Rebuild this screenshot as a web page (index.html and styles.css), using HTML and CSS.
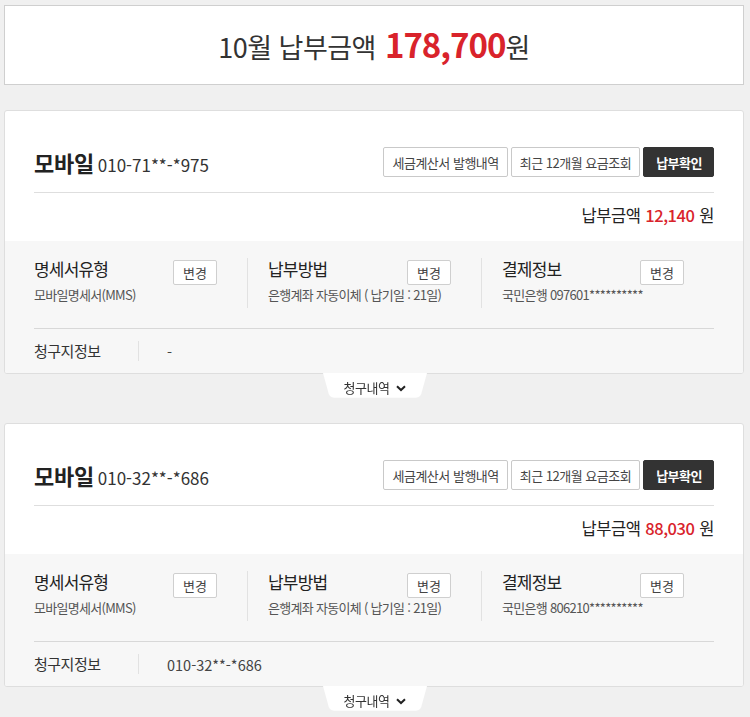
FILE: index.html
```html
<!DOCTYPE html>
<html lang="ko">
<head>
<meta charset="utf-8">
<link rel="stylesheet" href="styles.css">
</head>
<body>
<div class="page">
  <div class="total">
    <span class="total-label">10월 납부금액</span>
    <span class="total-num">178,700</span><span class="total-unit">원</span>
  </div>

  <div class="card">
    <div class="card-top">
      <div class="head">
        <div class="title"><strong>모바일</strong> <span class="phone">010-71**-*975</span></div>
        <div class="btns">
          <button class="btn">세금계산서 발행내역</button>
          <button class="btn">최근 12개월 요금조회</button>
          <button class="btn btn-dark">납부확인</button>
        </div>
      </div>
      <div class="amount">납부금액 <span class="red">12,140</span> 원</div>
    </div>
    <div class="card-info">
      <div class="cols">
        <div class="col">
          <div class="col-head"><span class="col-title">명세서유형</span><button class="btn-sm">변경</button></div>
          <div class="col-sub">모바일명세서(MMS)</div>
        </div>
        <div class="col">
          <div class="col-head"><span class="col-title">납부방법</span><button class="btn-sm">변경</button></div>
          <div class="col-sub">은행계좌 자동이체 ( 납기일 : 21일)</div>
        </div>
        <div class="col">
          <div class="col-head"><span class="col-title">결제정보</span><button class="btn-sm">변경</button></div>
          <div class="col-sub">국민은행 097601**********</div>
        </div>
      </div>
      <div class="bill">
        <span class="bill-label">청구지정보</span>
        <span class="bill-value">-</span>
      </div>
    </div>
  </div>
  <div class="tab-wrap"><div class="tab">청구내역 <svg class="chev" width="10" height="7" viewBox="0 0 10 7"><path d="M1 1.2 L5 5 L9 1.2" fill="none" stroke="#222" stroke-width="2"/></svg></div></div>

  <div class="card">
    <div class="card-top">
      <div class="head">
        <div class="title"><strong>모바일</strong> <span class="phone">010-32**-*686</span></div>
        <div class="btns">
          <button class="btn">세금계산서 발행내역</button>
          <button class="btn">최근 12개월 요금조회</button>
          <button class="btn btn-dark">납부확인</button>
        </div>
      </div>
      <div class="amount">납부금액 <span class="red">88,030</span> 원</div>
    </div>
    <div class="card-info">
      <div class="cols">
        <div class="col">
          <div class="col-head"><span class="col-title">명세서유형</span><button class="btn-sm">변경</button></div>
          <div class="col-sub">모바일명세서(MMS)</div>
        </div>
        <div class="col">
          <div class="col-head"><span class="col-title">납부방법</span><button class="btn-sm">변경</button></div>
          <div class="col-sub">은행계좌 자동이체 ( 납기일 : 21일)</div>
        </div>
        <div class="col">
          <div class="col-head"><span class="col-title">결제정보</span><button class="btn-sm">변경</button></div>
          <div class="col-sub">국민은행 806210**********</div>
        </div>
      </div>
      <div class="bill">
        <span class="bill-label">청구지정보</span>
        <span class="bill-value">010-32**-*686</span>
      </div>
    </div>
  </div>
  <div class="tab-wrap"><div class="tab">청구내역 <svg class="chev" width="10" height="7" viewBox="0 0 10 7"><path d="M1 1.2 L5 5 L9 1.2" fill="none" stroke="#222" stroke-width="2"/></svg></div></div>
</div>
</body>
</html>
```

FILE: styles.css
```css
* { box-sizing: border-box; }
html, body { margin: 0; padding: 0; }
body {
  background: #f0f0f0;
  font-family: "Noto Sans CJK KR", "Noto Sans", sans-serif;
  color: #333;
  width: 750px;
  height: 717px;
  overflow: hidden;
}
.page { padding: 5px 6px 0 4px; }

.total {
  height: 80px;
  background: #fff;
  border: 1px solid #cfcfcf;
  display: flex;
  align-items: baseline;
  justify-content: center;
  padding-top: 14px;
  letter-spacing: -0.5px;
}
.total-label { font-size: 27px; color: #333; margin-right: 9px; }
.total-num { font-size: 33px; font-weight: bold; color: #d9232b; letter-spacing: -1px; }
.total-unit { font-size: 27px; color: #333; }

.card {
  margin-top: 25px;
  background: #fff;
  border: 1px solid #dedede;
  border-radius: 3px;
  overflow: hidden;
}
.tab-wrap + .card { margin-top: 21px; }

.card-top { padding: 36px 29px 0 29px; }
.head {
  display: flex;
  justify-content: space-between;
  align-items: center;
  height: 30px;
}
.title { color: #222; letter-spacing: -0.5px; }
.title strong { font-size: 22px; font-weight: bold; letter-spacing: -0.3px; }
.phone { font-size: 17px; color: #333; letter-spacing: 0; }
.btns { display: flex; gap: 3px; }
.btn {
  font-family: inherit;
  height: 30px;
  padding: 0 8px;
  font-size: 13px;
  color: #444;
  background: #fff;
  border: 1px solid #c9c9c9;
  border-radius: 2px;
  letter-spacing: -0.5px;
}
.btn-dark {
  background: #333;
  border-color: #333;
  color: #fff;
  font-weight: bold;
  padding: 0 11px 0 12px;
}
.amount {
  margin-top: 15px;
  border-top: 1px solid #dedede;
  height: 49px;
  padding-bottom: 4px;
  display: flex;
  align-items: center;
  justify-content: flex-end;
  font-size: 16.5px;
  color: #222;
  letter-spacing: -0.5px;
}
.amount .red { color: #d9232b; font-weight: 500; margin: 0 5px; }

.card-info {
  background: #f7f7f7;
  padding: 17px 29px 0 29px;
}
.cols {
  display: grid;
  grid-template-columns: 213px 234px 1fr;
  padding-bottom: 20px;
  border-bottom: 1px solid #d8d8d8;
}
.col {
  height: 50px;
  padding-right: 30px;
}
.col + .col {
  border-left: 1px solid #e2e2e2;
  padding-left: 20px;
}
.col-head {
  display: flex;
  justify-content: space-between;
  align-items: flex-start;
  height: 27px;
}
.col-title { font-size: 17px; line-height: 22px; color: #222; letter-spacing: -0.8px; }
.btn-sm {
  font-family: inherit;
  width: 44px;
  height: 25px;
  padding: 0;
  font-size: 13px;
  color: #444;
  background: #fff;
  border: 1px solid #cfcfcf;
  border-radius: 2px;
  margin-top: 2px;
}
.col-sub {
  margin-top: 0;
  font-size: 13px;
  line-height: 19px;
  color: #555;
  letter-spacing: -0.7px;
}
.bill {
  height: 44px;
  display: flex;
  align-items: center;
  font-size: 15px;
  color: #333;
}
.bill-label {
  width: 105px;
  border-right: 1px solid #e2e2e2;
  height: 20px;
  line-height: 20px;
  letter-spacing: -0.5px;
}
.bill-value { padding-left: 28px; color: #444; font-size: 14.5px; }

.tab-wrap {
  display: flex;
  justify-content: center;
  padding-left: 2px;
}
.tab {
  position: relative;
  width: 104px;
  height: 29px;
  margin-top: -1px;
  display: flex;
  align-items: center;
  justify-content: center;
  gap: 7px;
  font-size: 13px;
  color: #333;
  letter-spacing: -0.5px;
  z-index: 0;
}
.tab::before {
  content: "";
  position: absolute;
  left: 0; right: 0; top: 0; bottom: 0;
  background: #fff;
  border-radius: 0 0 5px 5px;
  transform: perspective(40px) rotateX(-12deg);
  transform-origin: top;
  z-index: -1;
}
.chev { margin-top: 1px; }
```
